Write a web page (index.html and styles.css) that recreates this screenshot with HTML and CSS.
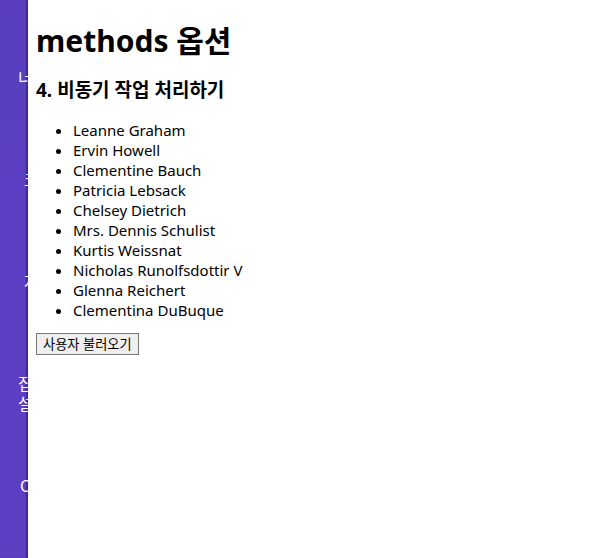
FILE: index.html
```html
<!DOCTYPE html>
<html lang="ko">
<head>
<meta charset="utf-8">
<link rel="stylesheet" href="styles.css">
</head>
<body>
<div class="layout">
  <nav class="sidebar">
    <div class="nav-item i1">너의 메뉴</div>
    <div class="nav-item i2">코드 보기</div>
    <div class="nav-item i3">자료실</div>
    <div class="nav-item i4">집중 모드<br>설정하기</div>
    <div class="nav-item i5">Contact</div>
  </nav>
  <main class="content">
    <h1 class="title">methods 옵션</h1>
    <h3 class="subtitle">4. 비동기 작업 처리하기</h3>
    <ul class="users">
      <li>Leanne Graham</li>
      <li>Ervin Howell</li>
      <li>Clementine Bauch</li>
      <li>Patricia Lebsack</li>
      <li>Chelsey Dietrich</li>
      <li>Mrs. Dennis Schulist</li>
      <li>Kurtis Weissnat</li>
      <li>Nicholas Runolfsdottir V</li>
      <li>Glenna Reichert</li>
      <li>Clementina DuBuque</li>
    </ul>
    <button class="load-btn">사용자 불러오기</button>
  </main>
</div>
</body>
</html>
```

FILE: styles.css
```css
html, body {
  margin: 0;
  padding: 0;
  height: 100%;
  background: #ffffff;
}
body {
  font-family: "Noto Sans", "Noto Sans CJK KR", sans-serif;
  color: #000;
}
.layout {
  display: flex;
  min-height: 100vh;
}
.sidebar {
  width: 28px;
  flex: 0 0 28px;
  background: linear-gradient(180deg, #5a3ec0 0%, #5d3fc3 100%);
  box-shadow: inset -2px 0 1px rgba(30, 15, 80, 0.45);
  overflow: hidden;
  display: flex;
  flex-direction: column;
  padding-top: 67px;
  gap: 82px;
  color: #ffffff;
  font-family: "Noto Sans CJK KR", "Noto Sans", sans-serif;
  font-size: 16px;
  line-height: 20px;
  white-space: nowrap;
}
.nav-item { padding-left: 18px; }
.i2 { padding-left: 24px; }
.i3 { padding-left: 24px; }
.i4 { padding-left: 18px; }
.i5 { padding-left: 20px; margin-top: -20px; }
.content {
  flex: 1;
  padding: 0 8px;
}
.title {
  font-size: 30px;
  font-weight: bold;
  margin: 20px 0 0;
  line-height: 42px;
}
.subtitle {
  font-size: 19px;
  font-weight: bold;
  margin: 16px 0 0;
  line-height: 24px;
}
.users {
  margin: 18px 0 0;
  padding-left: 37px;
  font-size: 15px;
  line-height: 20px;
}
.load-btn {
  margin-top: 13px;
  font-family: "Noto Sans CJK KR", "Noto Sans", sans-serif;
  font-size: 13.2px;
  line-height: 16px;
  padding: 2px 6px;
  background: #efefef;
  border: 1px solid #767676;
  border-radius: 0;
  color: #000;
}
```
